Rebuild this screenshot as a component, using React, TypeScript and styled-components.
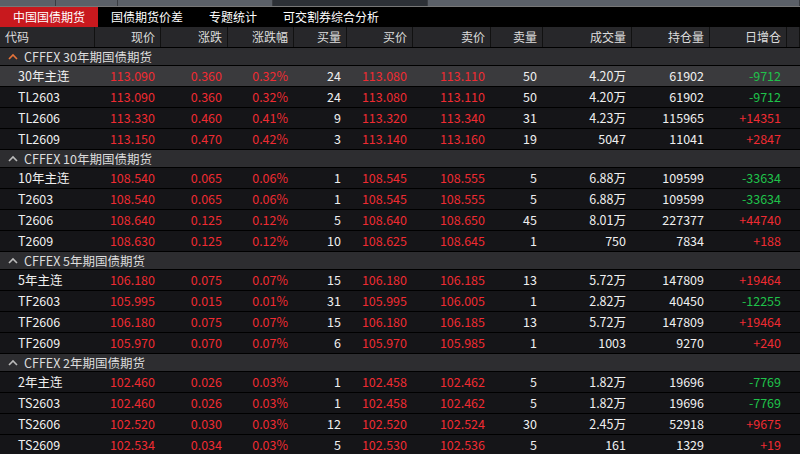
import React from "react";
import styled, { createGlobalStyle } from "styled-components";

const G = createGlobalStyle`
  * { box-sizing: border-box; }
  body { margin:0; background:#000; font-family: "Noto Sans CJK SC", "Noto Sans", sans-serif; }
`;
const cols = "95px 66px 67px 66px 53px 66px 78px 52px 89px 78px 77px 13px";
const Page = styled.div`width:800px;height:454px;overflow:hidden;background:#0e0e10;`;
const Strip = styled.div`height:7px;display:flex;background:#5b6068;border-bottom:1px solid #777;`;
const Seg = styled.div<{ w: number; dark?: boolean }>`width:${p => p.w}px;flex:none;background:${p => p.dark ? "#2c3036" : "#5b6068"};border-right:1px solid #3a3d42;`;
const Tabs = styled.div`height:20px;display:flex;background:#000;`;
const Tab = styled.div<{ on?: boolean }>`padding:0 13px;line-height:20px;font-size:12px;color:#fff;white-space:nowrap;background:${p => p.on ? "#c8191e" : "transparent"};`;
const Row = styled.div<{ bg: string }>`display:grid;grid-template-columns:${cols};grid-template-rows:20px;height:21px;overflow:hidden;background:${p => p.bg};border-bottom:1px solid #000;align-items:center;font-size:12.5px;line-height:20px;`;
const H = styled.div<{ left?: boolean }>`color:#ddd;font-size:12px;text-align:${p => p.left ? "left" : "right"};padding:0 5px;border-right:1px solid #111;height:20px;line-height:20px;white-space:nowrap;overflow:hidden;`;
const C = styled.div<{ c: string; left?: boolean }>`color:${p => p.c};text-align:${p => p.left ? "left" : "right"};padding:${p => p.left ? "0 0 0 18px" : "0 6px 0 0"};white-space:nowrap;`;
const GroupH = styled.div`height:18px;overflow:hidden;background:#2d2d30;border-bottom:1px solid #000;display:flex;align-items:center;gap:6px;padding-left:8px;color:#ddd;font-size:12.5px;line-height:17px;`;

const R = "#ef2b32", W = "#f0f0f0", GR = "#1fc24a";
type D = string[];
const groups: { name: string; orange?: boolean; rows: D[] }[] = [
  { name: "CFFEX 30年期国债期货", orange: true, rows: [
    ["30年主连","113.090","0.360","0.32%","24","113.080","113.110","50","4.20万","61902","-9712"],
    ["TL2603","113.090","0.360","0.32%","24","113.080","113.110","50","4.20万","61902","-9712"],
    ["TL2606","113.330","0.460","0.41%","9","113.320","113.340","31","4.23万","115965","+14351"],
    ["TL2609","113.150","0.470","0.42%","3","113.140","113.160","19","5047","11041","+2847"]]},
  { name: "CFFEX 10年期国债期货", rows: [
    ["10年主连","108.540","0.065","0.06%","1","108.545","108.555","5","6.88万","109599","-33634"],
    ["T2603","108.540","0.065","0.06%","1","108.545","108.555","5","6.88万","109599","-33634"],
    ["T2606","108.640","0.125","0.12%","5","108.640","108.650","45","8.01万","227377","+44740"],
    ["T2609","108.630","0.125","0.12%","10","108.625","108.645","1","750","7834","+188"]]},
  { name: "CFFEX 5年期国债期货", rows: [
    ["5年主连","106.180","0.075","0.07%","15","106.180","106.185","13","5.72万","147809","+19464"],
    ["TF2603","105.995","0.015","0.01%","31","105.995","106.005","1","2.82万","40450","-12255"],
    ["TF2606","106.180","0.075","0.07%","15","106.180","106.185","13","5.72万","147809","+19464"],
    ["TF2609","105.970","0.070","0.07%","6","105.970","105.985","1","1003","9270","+240"]]},
  { name: "CFFEX 2年期国债期货", rows: [
    ["2年主连","102.460","0.026","0.03%","1","102.458","102.462","5","1.82万","19696","-7769"],
    ["TS2603","102.460","0.026","0.03%","1","102.458","102.462","5","1.82万","19696","-7769"],
    ["TS2606","102.520","0.030","0.03%","12","102.520","102.524","30","2.45万","52918","+9675"],
    ["TS2609","102.534","0.034","0.03%","5","102.530","102.536","5","161","1329","+19"]]},
];
const heads = ["代码","现价","涨跌","涨跌幅","买量","买价","卖价","卖量","成交量","持仓量","日增仓",""];
const color = (i: number, v: string) => i === 0 ? W : [1,2,3,5,6].includes(i) ? R : i === 10 ? (v.startsWith("-") ? GR : R) : W;

const Chev = ({ c }: { c: string }) => (
  <svg width="10" height="7" viewBox="0 0 10 7"><path d="M1 6 L5 2 L9 6" stroke={c} strokeWidth="1.6" fill="none" /></svg>
);

export default function App() {
  return (
    <Page>
      <G />
      <Strip>
        <Seg w={56} /><Seg w={62} /><Seg w={155} /><Seg w={155} dark /><Seg w={372} />
      </Strip>
      <Tabs>
        <Tab on>中国国债期货</Tab><Tab>国债期货价差</Tab><Tab>专题统计</Tab><Tab>可交割券综合分析</Tab>
      </Tabs>
      <Row bg="#27272a">
        {heads.map((h, i) => <H key={i} left={i === 0}>{h}</H>)}
      </Row>
      {groups.map((g, gi) => (
        <React.Fragment key={gi}>
          <GroupH><Chev c={g.orange ? "#e8743a" : "#bbb"} />{g.name}</GroupH>
          {g.rows.map((r, ri) => (
            <Row key={ri} bg={gi === 0 && ri === 0 ? "#3a3a3d" : "#151518"}>
              {r.map((v, i) => <C key={i} c={color(i, v)} left={i === 0}>{v}</C>)}
              <div />
            </Row>
          ))}
        </React.Fragment>
      ))}
    </Page>
  );
}
